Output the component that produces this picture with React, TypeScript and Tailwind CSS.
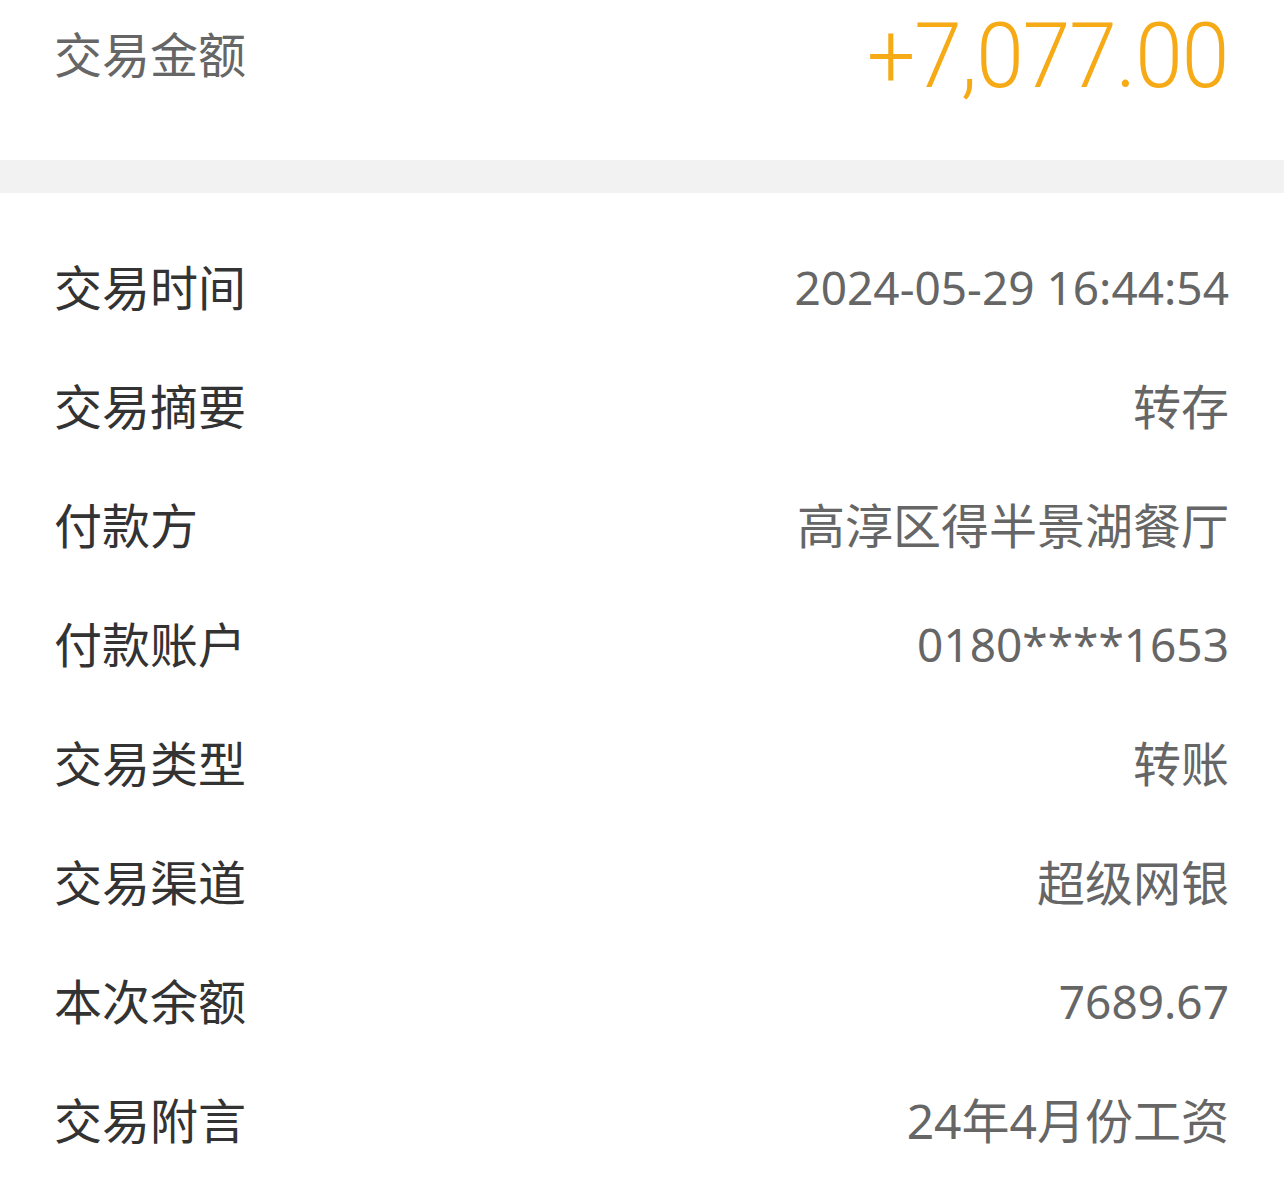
import React from "react";

const rows: [string, string, boolean][] = [
  ["交易时间", "2024-05-29 16:44:54", true],
  ["交易摘要", "转存", false],
  ["付款方", "高淳区得半景湖餐厅", false],
  ["付款账户", "0180****1653", true],
  ["交易类型", "转账", false],
  ["交易渠道", "超级网银", false],
  ["本次余额", "7689.67", true],
  ["交易附言", "24年4月份工资", false],
];

export default function App() {
  return (
    <div
      className="w-[1284px] h-[1204px] bg-white overflow-hidden"
      style={{ fontFamily: '"Noto Sans", "Noto Sans CJK SC", sans-serif' }}
    >
      <div className="h-[160px] pl-[54px] pr-14 flex items-start justify-between">
        <div className="mt-[24px] text-[48px] leading-[62px] text-[#666666]">交易金额</div>
        <div
          className="mt-[4px] text-[90px] leading-[106px] font-light text-[#F5AA16] origin-right scale-x-[0.95] tracking-[-1px]"
          style={{ fontFamily: 'Roboto, "Noto Sans", sans-serif' }}
        >
          +7,077.00
        </div>
      </div>
      <div className="h-[33px] bg-[#f2f2f2]" />
      <div className="pt-[35px]">
        {rows.map(([k, v, num]) => (
          <div key={k} className="h-[119px] pl-[54px] pr-[55px] flex items-center justify-between">
            <div className="text-[48px] text-[#333333]">{k}</div>
            <div className={num ? "text-[46px] text-[#666666]" : "text-[48px] text-[#666666]"}>{v}</div>
          </div>
        ))}
      </div>
    </div>
  );
}
